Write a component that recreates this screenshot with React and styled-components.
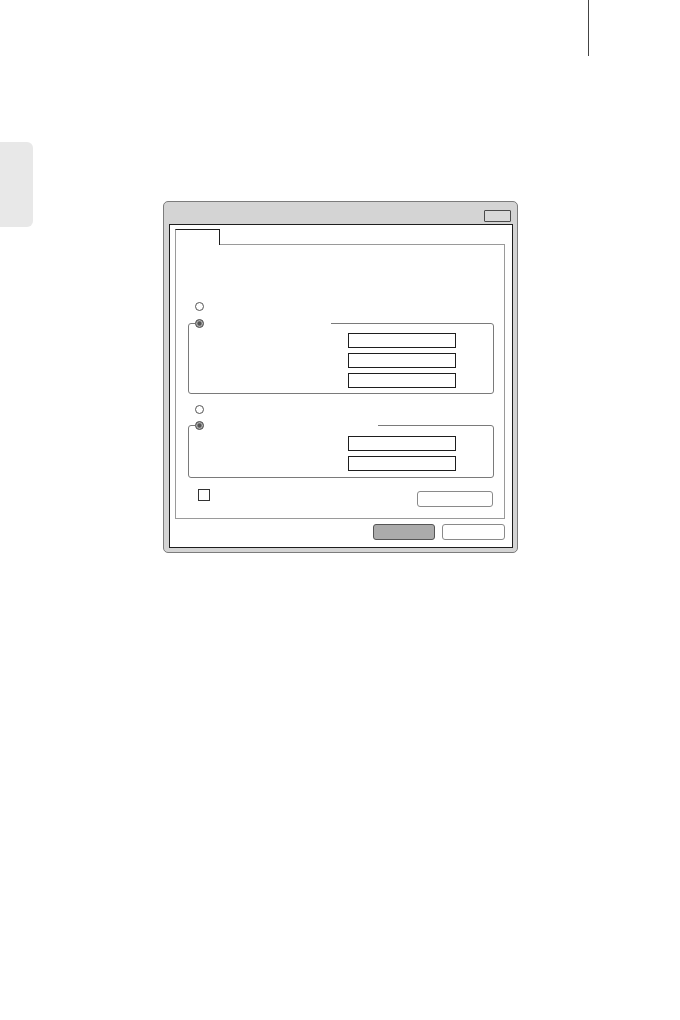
import React from "react";
import styled, { createGlobalStyle } from "styled-components";

const GlobalStyle = createGlobalStyle`
  html, body { margin: 0; padding: 0; background: #ffffff; }
  body { font-family: "Liberation Sans", Arial, sans-serif; }
  *, *::before, *::after { box-sizing: border-box; }
`;

const Page = styled.div`
  width: 680px;
  height: 1020px;
  display: flex;
  align-items: flex-start;
  overflow: hidden;
`;

const SideTab = styled.div`
  flex: none;
  margin-top: 142px;
  width: 33px;
  height: 85px;
  background: #e8e8e8;
  border-radius: 0 6px 6px 0;
`;

const EdgeLine = styled.div`
  flex: none;
  margin-left: 70px;
  width: 1px;
  height: 56px;
  background: #444;
`;

const Dialog = styled.div`
  flex: none;
  margin-left: 130px;
  margin-top: 201px;
  width: 355px;
  height: 352px;
  border: 1px solid #7c7c7c;
  border-radius: 5px;
  background: #d4d4d4;
  display: flex;
  flex-direction: column;
  padding: 0 4px 4px 5px;
`;

const TitleBar = styled.div`
  height: 22px;
  display: flex;
  justify-content: flex-end;
  align-items: flex-end;
  padding: 0 2px 2px 0;
`;

const CloseButton = styled.div`
  width: 27px;
  height: 12px;
  border: 1px solid #4a4a4a;
  border-radius: 1px;
  background: #d8d8d8;
`;

const InnerPanel = styled.div`
  height: 324px;
  border: 1px solid #1e1e1e;
  background: #ffffff;
  display: flex;
  flex-direction: column;
  padding: 4px 7px 7px 5px;
`;

const TabStrip = styled.div`
  display: flex;
  align-items: stretch;
  height: 16px;
`;

const Tab = styled.div`
  width: 45px;
  border-top: 1px solid #1e1e1e;
  border-right: 1px solid #1e1e1e;
  border-left: 1px solid #9a9a9a;
`;

const TabRule = styled.div`
  flex: 1;
  border-bottom: 1px solid #9a9a9a;
`;

const TabBody = styled.div`
  height: 274px;
  border: 1px solid #9a9a9a;
  border-top: none;
  display: flex;
  flex-direction: column;
  padding: 57px 10px 0 12px;
`;

const Radio = styled.span`
  display: block;
  flex: none;
  width: 9px;
  height: 9px;
  border-radius: 50%;
  border: 1px solid ${(p) => (p.$checked ? "#5a5a5a" : "#555555")};
  background: ${(p) => (p.$checked ? "#555555" : "#ffffff")};
  box-shadow: ${(p) => (p.$checked ? "inset 0 0 0 1.3px #b4b4b4" : "none")};
`;

const LooseRadio = styled(Radio)`
  margin-left: 7px;
  margin-top: ${(p) => p.$top}px;
`;

const Group = styled.fieldset`
  margin: ${(p) => p.$top}px 0 0 0;
  padding: 0 0 ${(p) => p.$bottom}px 0;
  border: 1px solid #7a7a7a;
  border-radius: 3px;
  min-width: 0;
  display: flex;
  flex-direction: column;
  align-items: flex-start;
`;

const Legend = styled.legend`
  margin-left: 6px;
  padding: 0;
  height: 9px;
  display: flex;
  align-items: center;
  width: ${(p) => p.$width}px;
`;

const Field = styled.div`
  margin-left: 159px;
  margin-top: ${(p) => p.$top}px;
  width: 108px;
  height: 15px;
  border: 1px solid #1e1e1e;
  background: #ffffff;
`;

const FooterRow = styled.div`
  margin-top: 11px;
  display: flex;
  justify-content: space-between;
  align-items: flex-start;
  padding: 0 1px 0 10px;
`;

const Checkbox = styled.span`
  display: block;
  width: 12px;
  height: 12px;
  border: 1px solid #333333;
  background: #ffffff;
`;

const PanelButton = styled.div`
  margin-top: 2px;
  width: 76px;
  height: 16px;
  border: 1px solid #8a8a8a;
  border-radius: 3px;
  background: #ffffff;
`;

const ButtonRow = styled.div`
  margin-top: 5px;
  display: flex;
  justify-content: flex-end;
  gap: 7px;
`;

const DialogButton = styled.div`
  width: ${(p) => p.$w}px;
  height: 16px;
  border: 1px solid ${(p) => (p.$primary ? "#555555" : "#8a8a8a")};
  border-radius: 3px;
  background: ${(p) => (p.$primary ? "#ababab" : "#ffffff")};
`;

export default function App() {
  return (
    <>
      <GlobalStyle />
      <Page>
        <SideTab />
        <Dialog>
          <TitleBar>
            <CloseButton />
          </TitleBar>
          <InnerPanel>
            <TabStrip>
              <Tab />
              <TabRule />
            </TabStrip>
            <TabBody>
              <LooseRadio $top={0} />
              <Group $top={8} $bottom={5}>
                <Legend $width={136}>
                  <Radio $checked />
                </Legend>
                <Field $top={5} />
                <Field $top={5} />
                <Field $top={5} />
              </Group>
              <LooseRadio $top={11} />
              <Group $top={7} $bottom={6}>
                <Legend $width={183}>
                  <Radio $checked />
                </Legend>
                <Field $top={6} />
                <Field $top={5} />
              </Group>
              <FooterRow>
                <Checkbox />
                <PanelButton />
              </FooterRow>
            </TabBody>
            <ButtonRow>
              <DialogButton $primary $w={62} />
              <DialogButton $w={63} />
            </ButtonRow>
          </InnerPanel>
        </Dialog>
        <EdgeLine />
      </Page>
    </>
  );
}
